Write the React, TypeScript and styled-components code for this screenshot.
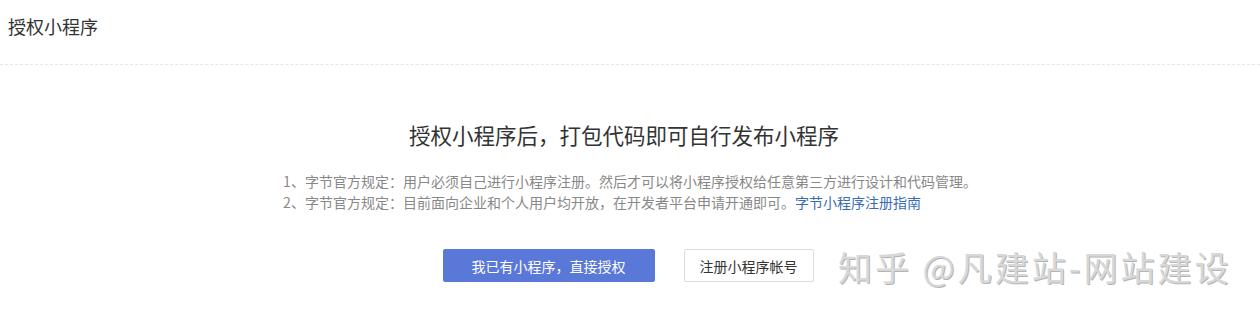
import styled, { createGlobalStyle } from "styled-components";

const GlobalStyle = createGlobalStyle`
    body {
        margin: 0;
        background: #fff;
        font-family: "Noto Sans CJK SC", "Liberation Sans", sans-serif;
    }
`;

const Page = styled.div`
    position: relative;
    width: 1260px;
    height: 320px;
    overflow: hidden;
`;

const Header = styled.div`
    height: 65px;
    padding: 0 8px 12px;
    display: flex;
    align-items: center;
    border-bottom: 1px dashed #e6e6e6;
    box-sizing: border-box;
`;

const PageTitle = styled.h2`
    margin: 0;
    font-size: 18px;
    font-weight: normal;
    color: #333;
`;

const Content = styled.div`
    display: flex;
    flex-direction: column;
    align-items: center;
    padding-top: 55px;
`;

const Heading = styled.h1`
    margin: 0 12px 0 0;
    font-size: 21.5px;
    line-height: 30px;
    font-weight: normal;
    color: #333;
`;

const Rules = styled.div`
    margin-top: 21px;
    font-size: 14px;
    line-height: 21px;
    color: #888;
    text-align: left;
`;

const Link = styled.a`
    color: #3a6bb8;
    text-decoration: none;
`;

const Actions = styled.div`
    display: flex;
    gap: 29px;
    margin: 36px 4px 0 0;
`;

const Button = styled.button<{ $primary?: boolean }>`
    height: 33px;
    padding: 0;
    width: ${(p) => (p.$primary ? 212 : 130)}px;
    white-space: nowrap;
    font-family: inherit;
    font-size: 14px;
    border-radius: 2px;
    border: 1px solid ${(p) => (p.$primary ? "#5a78d8" : "#dcdcdc")};
    background: ${(p) => (p.$primary ? "#5a78d8" : "#fff")};
    color: ${(p) => (p.$primary ? "#fff" : "#333")};
    cursor: pointer;
`;

const Watermark = styled.div`
    position: absolute;
    left: 838px;
    top: 246px;
    font-size: 34px;
    line-height: 42px;
    letter-spacing: 3px;
    color: #d8d8d8;
    text-shadow: 1px 1px 0 #b4b4b4;
    white-space: nowrap;
    pointer-events: none;
`;

const App = () => {
    return (
        <Page>
            <GlobalStyle />
            <Header>
                <PageTitle>授权小程序</PageTitle>
            </Header>
            <Content>
                <Heading>授权小程序后，打包代码即可自行发布小程序</Heading>
                <Rules>
                    <div>1、字节官方规定：用户必须自己进行小程序注册。然后才可以将小程序授权给任意第三方进行设计和代码管理。</div>
                    <div>
                        2、字节官方规定：目前面向企业和个人用户均开放，在开发者平台申请开通即可。<Link href="#">字节小程序注册指南</Link>
                    </div>
                </Rules>
                <Actions>
                    <Button $primary>我已有小程序，直接授权</Button>
                    <Button>注册小程序帐号</Button>
                </Actions>
            </Content>
            <Watermark>知乎 @凡建站-网站建设</Watermark>
        </Page>
    );
};

export default App;
